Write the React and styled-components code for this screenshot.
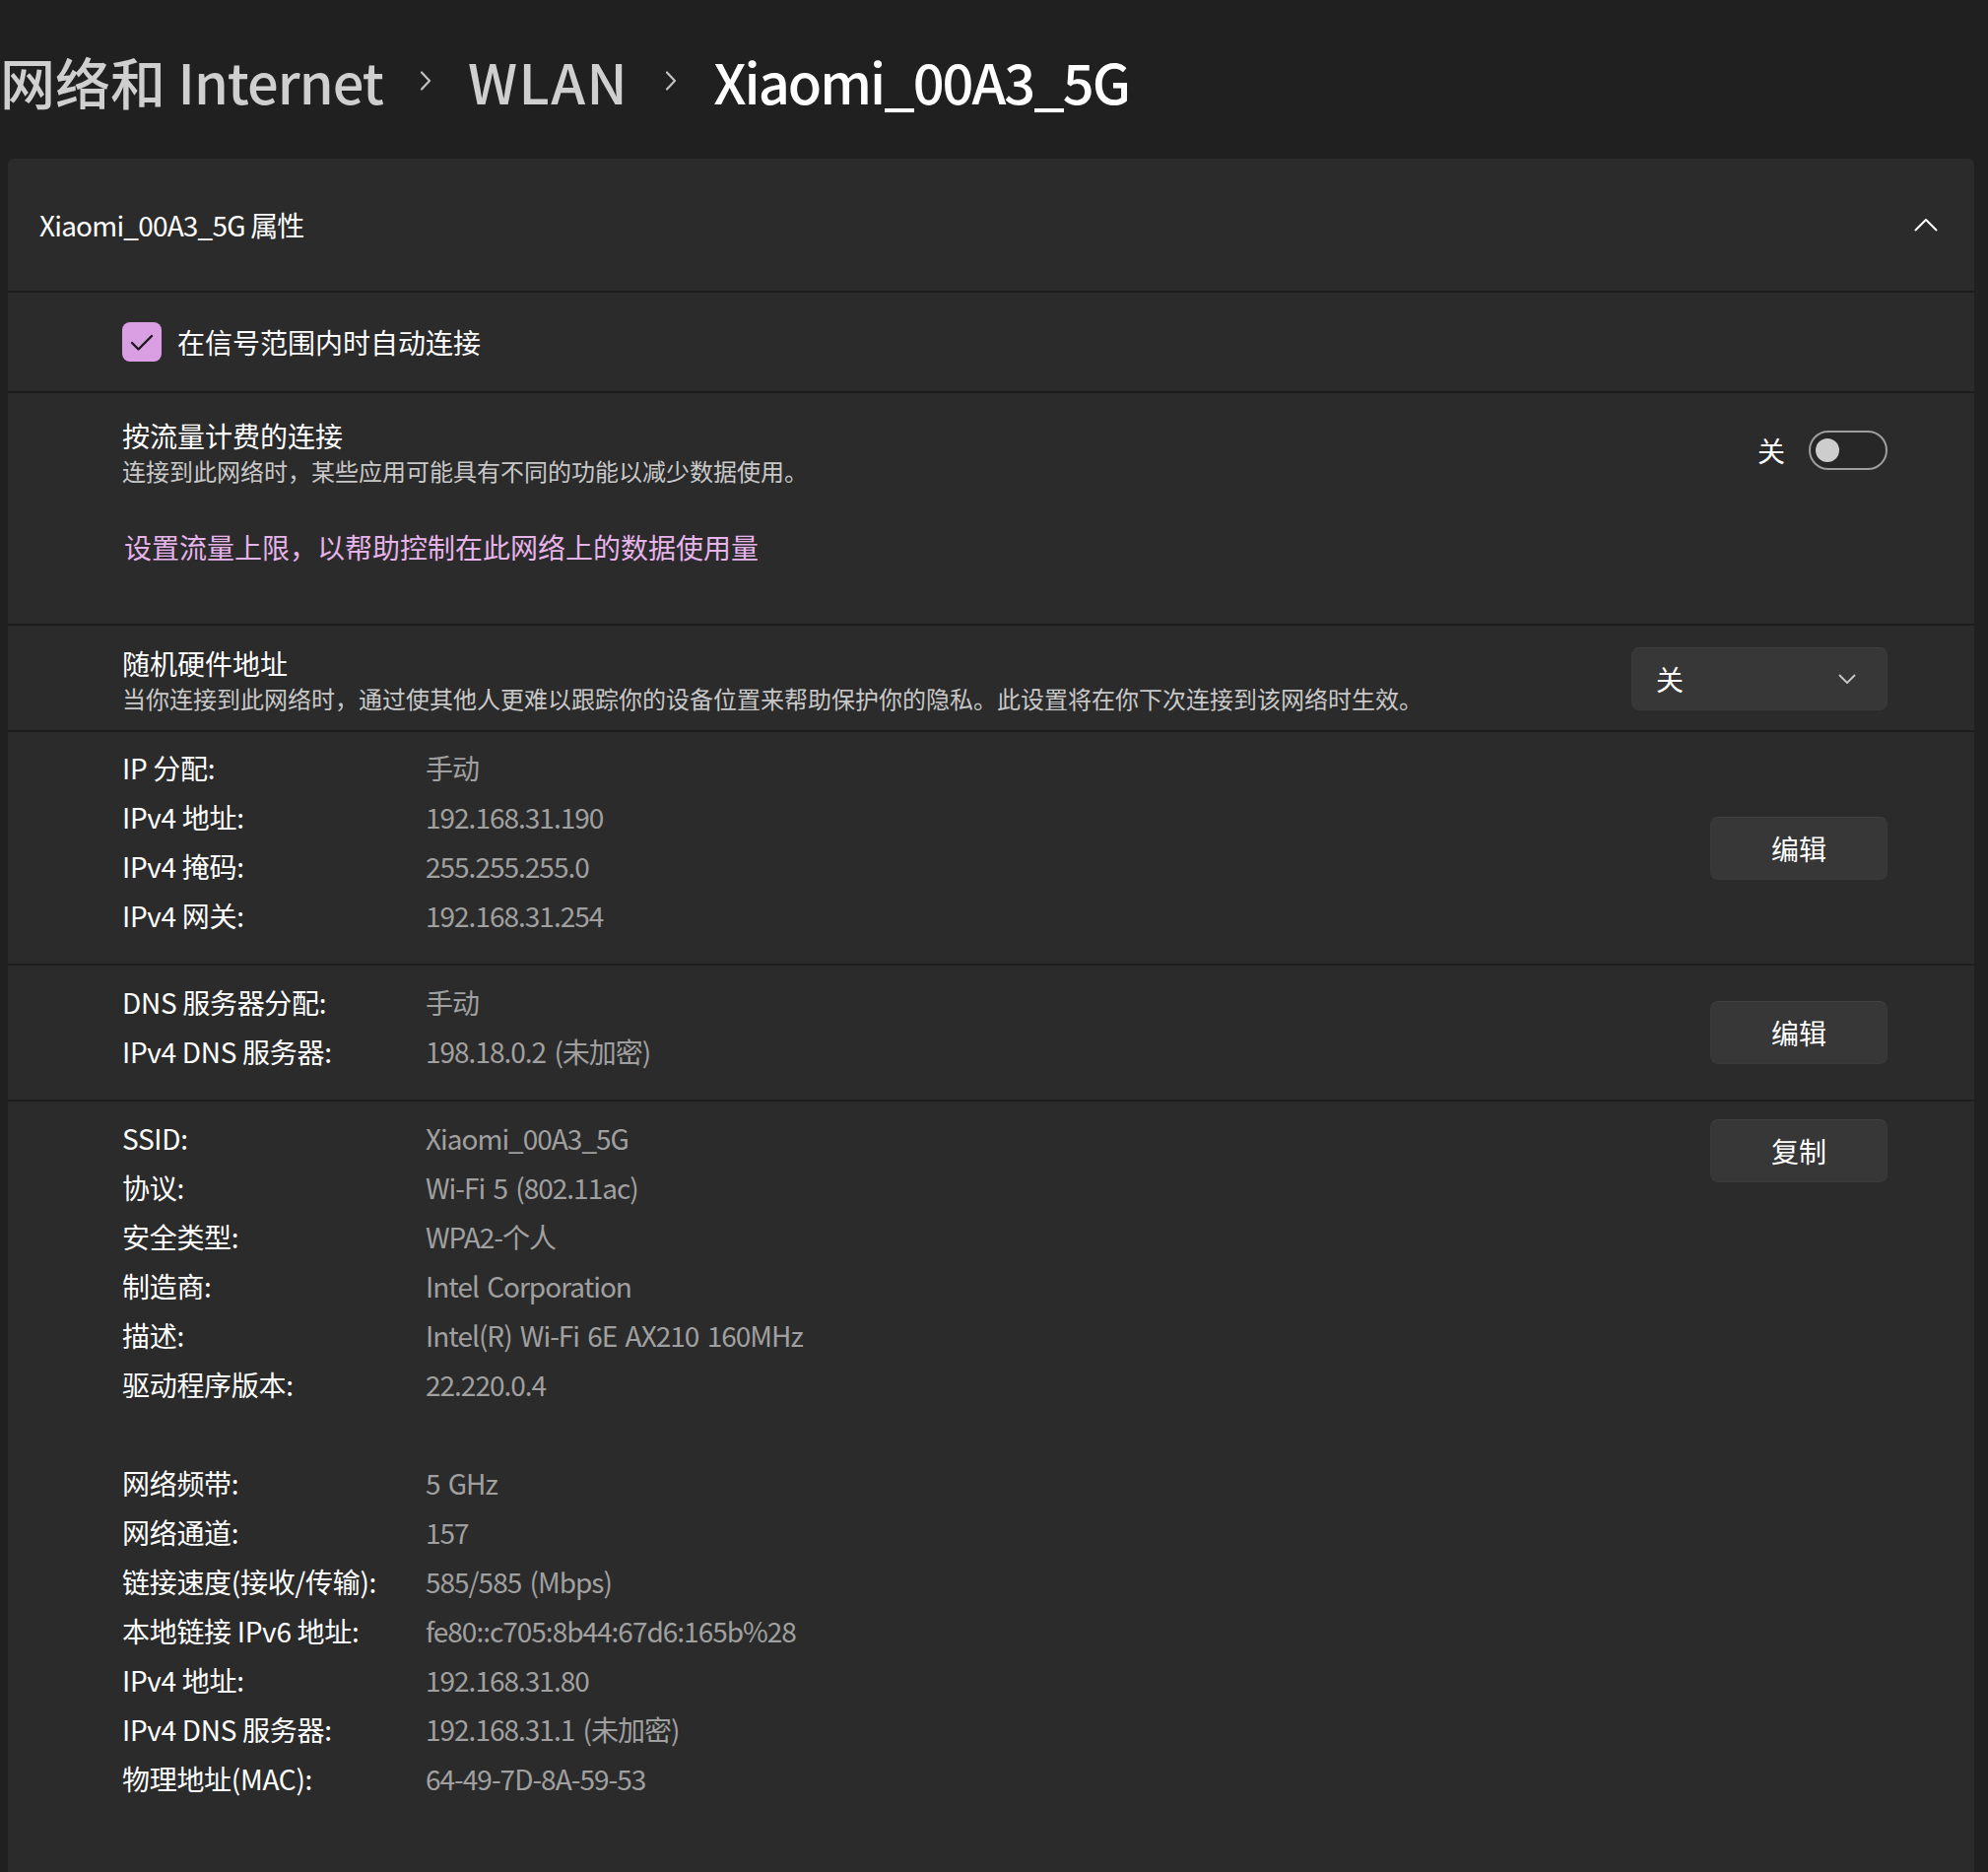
import React from 'react'
import styled, { createGlobalStyle } from 'styled-components'

const GlobalStyle = createGlobalStyle`
  html, body {
    margin: 0;
    padding: 0;
    background: #202020;
    overflow: hidden;
  }
  body {
    font-family: "Noto Sans CJK SC", "Noto Sans", sans-serif;
    color: #ffffff;
  }
`

const ipInfo = [
  ['IP 分配:', '手动'],
  ['IPv4 地址:', '192.168.31.190'],
  ['IPv4 掩码:', '255.255.255.0'],
  ['IPv4 网关:', '192.168.31.254'],
]

const dnsInfo = [
  ['DNS 服务器分配:', '手动'],
  ['IPv4 DNS 服务器:', '198.18.0.2 (未加密)'],
]

const adapterInfo = [
  ['SSID:', 'Xiaomi_00A3_5G'],
  ['协议:', 'Wi-Fi 5 (802.11ac)'],
  ['安全类型:', 'WPA2-个人'],
  ['制造商:', 'Intel Corporation'],
  ['描述:', 'Intel(R) Wi-Fi 6E AX210 160MHz'],
  ['驱动程序版本:', '22.220.0.4'],
  null,
  ['网络频带:', '5 GHz'],
  ['网络通道:', '157'],
  ['链接速度(接收/传输):', '585/585 (Mbps)'],
  ['本地链接 IPv6 地址:', 'fe80::c705:8b44:67d6:165b%28'],
  ['IPv4 地址:', '192.168.31.80'],
  ['IPv4 DNS 服务器:', '192.168.31.1 (未加密)'],
  ['物理地址(MAC):', '64-49-7D-8A-59-53'],
]

const InfoList = ({ items }) => (
  <InfoGrid>
    {items.map((item, i) =>
      item ? (
        <React.Fragment key={i}>
          <Label>{item[0]}</Label>
          <Value>{item[1]}</Value>
        </React.Fragment>
      ) : (
        <BlankLine key={i} />
      )
    )}
  </InfoGrid>
)

const Chevron = ({ dir }) => {
  if (dir === 'up') {
    return (
      <svg width="24" height="14" viewBox="0 0 24 14" fill="none">
        <path d="M1.5 12.5 L12 2 L22.5 12.5" stroke="#ffffff" strokeWidth="2" strokeLinecap="round" strokeLinejoin="round" />
      </svg>
    )
  }
  if (dir === 'down') {
    return (
      <svg width="18" height="11" viewBox="0 0 18 11" fill="none">
        <path d="M1.5 1.5 L9 9 L16.5 1.5" stroke="#c8c8c8" strokeWidth="1.8" strokeLinecap="round" strokeLinejoin="round" />
      </svg>
    )
  }
  return (
    <svg width="12" height="22" viewBox="0 0 12 22" fill="none">
      <path d="M2 2.5 L10 11 L2 19.5" stroke="#c2c2c2" strokeWidth="2.2" strokeLinecap="round" strokeLinejoin="round" />
    </svg>
  )
}

const App = () => {
  return (
    <Page>
      <GlobalStyle />
      <Breadcrumb>
        <Crumb>
          网络和 <Latin $spacing={-1}>Internet</Latin>
        </Crumb>
        <Chevron />
        <Crumb>
          <Latin $spacing={1.5}>WLAN</Latin>
        </Crumb>
        <Chevron />
        <Crumb $current>
          <Latin $spacing={-2}>Xiaomi_00A3_5G</Latin>
        </Crumb>
      </Breadcrumb>

      <Panel>
        <PanelHeader>
          <HeaderTitle>Xiaomi_00A3_5G 属性</HeaderTitle>
          <Chevron dir="up" />
        </PanelHeader>

        <CheckRow>
          <CheckBox>
            <svg width="40" height="40" viewBox="0 0 40 40" fill="none">
              <path d="M10 21 L16.5 27.5 L30 14" stroke="#1a1a1a" strokeWidth="2.4" strokeLinecap="round" strokeLinejoin="round" />
            </svg>
          </CheckBox>
          <span>在信号范围内时自动连接</span>
        </CheckRow>

        <MeteredRow>
          <SettingTop>
            <div>
              <SettingTitle>按流量计费的连接</SettingTitle>
              <SettingDesc>连接到此网络时，某些应用可能具有不同的功能以减少数据使用。</SettingDesc>
            </div>
            <ToggleGroup>
              <span>关</span>
              <Toggle>
                <Knob />
              </Toggle>
            </ToggleGroup>
          </SettingTop>
          <Link>设置流量上限，以帮助控制在此网络上的数据使用量</Link>
        </MeteredRow>

        <MacRow>
          <div>
            <SettingTitle>随机硬件地址</SettingTitle>
            <SettingDesc>当你连接到此网络时，通过使其他人更难以跟踪你的设备位置来帮助保护你的隐私。此设置将在你下次连接到该网络时生效。</SettingDesc>
          </div>
          <Select>
            <span>关</span>
            <Chevron dir="down" />
          </Select>
        </MacRow>

        <InfoRow $top={11} $bottom={24}>
          <InfoList items={ipInfo} />
          <Button $shift={13}>编辑</Button>
        </InfoRow>

        <InfoRow $top={12} $bottom={24}>
          <InfoList items={dnsInfo} />
          <Button $shift={12}>编辑</Button>
        </InfoRow>

        <InfoRow $top={12} $bottom={110} $alignTop>
          <InfoList items={adapterInfo} />
          <Button $shift={6}>复制</Button>
        </InfoRow>
      </Panel>
    </Page>
  )
}

export default App

const Page = styled.div`
  width: 2018px;
  height: 1900px;
  overflow: hidden;
`

const Breadcrumb = styled.div`
  display: flex;
  align-items: center;
  gap: 37px;
  height: 76px;
  margin: 44px 0 41px 0;
  font-size: 56px;
  font-weight: 500;
  line-height: 76px;
  white-space: nowrap;
`

const Crumb = styled.span`
  color: ${(p) => (p.$current ? '#ffffff' : '#cfcfcf')};
`

const Latin = styled.span`
  letter-spacing: ${(p) => p.$spacing}px;
`

const Panel = styled.div`
  margin: 0 14px 0 8px;
  background: #2b2b2b;
  border-radius: 6px 6px 0 0;
`

const PanelHeader = styled.div`
  height: 134px;
  display: flex;
  align-items: center;
  justify-content: space-between;
  padding: 0 37px 0 32px;
  font-size: 28px;
`

const HeaderTitle = styled.span`
  letter-spacing: -0.8px;
`

const Row = styled.div`
  border-top: 2px solid #1d1d1d;
  padding-left: 116px;
  padding-right: 88px;
  font-size: 28px;
`

const CheckRow = styled(Row)`
  height: 100px;
  display: flex;
  align-items: center;
  gap: 16px;
`

const CheckBox = styled.div`
  width: 40px;
  height: 40px;
  border-radius: 8px;
  background: #da9ee2;
  display: flex;
  align-items: center;
  justify-content: center;
`

const MeteredRow = styled(Row)`
  padding-top: 23px;
  padding-bottom: 58px;
  display: flex;
  flex-direction: column;
`

const SettingTop = styled.div`
  display: flex;
  align-items: center;
  justify-content: space-between;
`

const SettingTitle = styled.div`
  font-size: 28px;
  line-height: 40px;
  color: #ffffff;
`

const SettingDesc = styled.div`
  font-size: 24px;
  line-height: 32px;
  color: #c8c8c8;
`

const ToggleGroup = styled.div`
  display: flex;
  align-items: center;
  gap: 24px;
  margin-top: -2px;
  font-size: 28px;
`

const Toggle = styled.div`
  width: 71px;
  height: 36px;
  border: 2px solid #9e9e9e;
  border-radius: 20px;
  background: #272727;
  display: flex;
  align-items: center;
  padding-left: 5px;
`

const Knob = styled.div`
  width: 24px;
  height: 24px;
  border-radius: 50%;
  background: #cdcdcd;
`

const Link = styled.div`
  margin-top: 41px;
  line-height: 40px;
  font-size: 28px;
  color: #e6b4ea;
  padding-left: 2px;
`

const MacRow = styled(Row)`
  padding-top: 18px;
  padding-bottom: 16px;
  display: flex;
  align-items: center;
  justify-content: space-between;
`

const Select = styled.div`
  width: 260px;
  height: 64px;
  box-sizing: border-box;
  padding: 0 31px 0 24px;
  border-radius: 8px;
  background: #373737;
  border: 1px solid #3a3a3a;
  border-top-color: #414141;
  display: flex;
  align-items: center;
  justify-content: space-between;
  font-size: 28px;
`

const InfoRow = styled(Row)`
  padding-top: ${(p) => p.$top}px;
  padding-bottom: ${(p) => p.$bottom}px;
  display: flex;
  align-items: ${(p) => (p.$alignTop ? 'flex-start' : 'center')};
  justify-content: space-between;
`

const InfoGrid = styled.div`
  display: grid;
  grid-template-columns: 308px auto;
  line-height: 50px;
  font-size: 28px;
`

const Label = styled.div`
  color: #ffffff;
  white-space: nowrap;
  letter-spacing: -0.3px;
`

const Value = styled.div`
  color: #a0a0a0;
  white-space: nowrap;
  letter-spacing: -1px;
  word-spacing: 3px;
`

const BlankLine = styled.div`
  grid-column: 1 / -1;
  height: 50px;
`

const Button = styled.div`
  width: 180px;
  height: 64px;
  box-sizing: border-box;
  margin-top: ${(p) => p.$shift || 0}px;
  border-radius: 8px;
  background: #373737;
  border: 1px solid #3a3a3a;
  border-top-color: #414141;
  display: flex;
  align-items: center;
  justify-content: center;
  font-size: 28px;
  color: #ffffff;
`
